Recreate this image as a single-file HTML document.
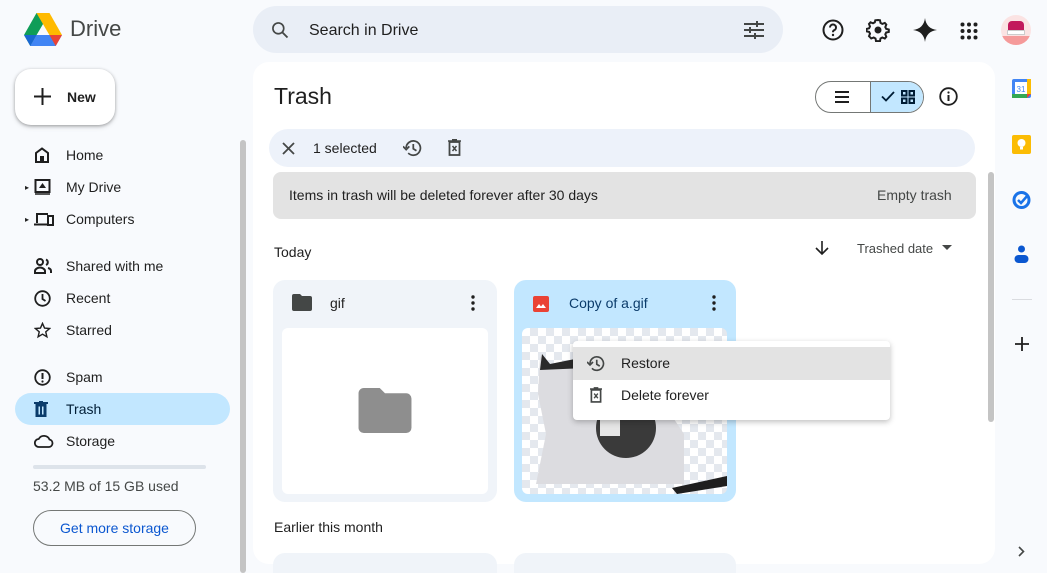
<!DOCTYPE html>
<html><head><style>
*{box-sizing:border-box;margin:0;padding:0}
body{width:1047px;height:573px;overflow:hidden;background:#f8fafd;font-family:"Liberation Sans",sans-serif;color:#1f1f1f;position:relative}
.a{position:absolute}
svg{display:block}
.nav{position:absolute;left:15px;width:215px;height:32px;display:flex;align-items:center;font-size:14px;color:#1f1f1f}
.nav svg{position:absolute;left:19px}
.nav span{position:absolute;left:51px}
.chk{background-color:#fff;background-image:linear-gradient(45deg,#e4e8ee 25%,transparent 25%,transparent 75%,#e4e8ee 75%),linear-gradient(45deg,#e4e8ee 25%,transparent 25%,transparent 75%,#e4e8ee 75%);background-size:16px 16px;background-position:0 0,8px 8px}
</style></head><body>
<!-- logo -->
<svg class="a" style="left:24px;top:13px" width="38" height="33" viewBox="0 0 38 33">
<polygon points="12.5,0 25.5,0 12.6,22 6.3,33 0,22" fill="#0f9d58"/>
<polygon points="12.5,0 25.5,0 38,22 25.4,22" fill="#ffba00"/>
<polygon points="6.3,33 12.6,22 38,22 31.7,33" fill="#4285f4"/>
<polygon points="25.4,22 38,22 31.7,33" fill="#ea4335"/>
<polygon points="0,22 12.6,22 6.3,33" fill="#1967d2"/>
</svg>
<div class="a" style="left:70px;top:16px;font-size:22px;color:#444746">Drive</div>
<!-- search -->
<div class="a" style="left:253px;top:6px;width:530px;height:47px;border-radius:24px;background:#e9eef6"></div>
<svg class="a" style="left:270px;top:20px" width="20" height="20" viewBox="0 0 24 24"><circle cx="10" cy="10" r="6.5" fill="none" stroke="#444746" stroke-width="2"/><path d="M15 15l6 6" stroke="#444746" stroke-width="2.2"/></svg>
<div class="a" style="left:309px;top:22px;font-size:16px;color:#1f1f1f">Search in Drive</div>
<svg class="a" style="left:743px;top:20px" width="22" height="20" viewBox="0 0 22 20"><path d="M1 4h20M1 10h20M1 16h20" stroke="#444746" stroke-width="2"/><path d="M14 1v6M7 7v6M12 13v6" stroke="#444746" stroke-width="2"/></svg>
<!-- top right icons -->
<svg class="a" style="left:822px;top:19px" width="22" height="22" viewBox="0 0 22 22"><circle cx="11" cy="11" r="9.5" fill="none" stroke="#1f1f1f" stroke-width="2"/><path d="M8 8.5a3 3 0 1 1 4 2.8c-.8.4-1 1-1 2" fill="none" stroke="#1f1f1f" stroke-width="2"/><circle cx="11" cy="16" r="1.2" fill="#1f1f1f"/></svg>
<svg class="a" style="left:866px;top:18px" width="24" height="24" viewBox="0 0 24 24"><path d="M12 2l2 .3.5 2.6 1.8 1 2.5-1 1.5 1.7-1 2.5.9 1.8 2.6.6v2.4l-2.6.6-.9 1.8 1 2.5-1.5 1.7-2.5-1-1.8 1-.5 2.6h-4l-.5-2.6-1.8-1-2.5 1L3 18.2l1-2.5-.9-1.8L.5 13.3v-2.4l2.6-.6.9-1.8-1-2.5L4.5 4.3l2.5 1 1.8-1L9.3 2.3z" fill="none" stroke="#1f1f1f" stroke-width="2"/><circle cx="12" cy="12" r="3.5" fill="#1f1f1f"/></svg>
<svg class="a" style="left:913px;top:18px" width="24" height="24" viewBox="0 0 24 24"><path d="M12 0C12.8 7 17 11.2 24 12 17 12.8 12.8 17 12 24 11.2 17 7 12.8 0 12 7 11.2 11.2 7 12 0z" fill="#1f1f1f"/></svg>
<svg class="a" style="left:960px;top:22px" width="18" height="18" viewBox="0 0 18 18" fill="#1f1f1f"><circle cx="2.5" cy="2.5" r="2"/><circle cx="9" cy="2.5" r="2"/><circle cx="15.5" cy="2.5" r="2"/><circle cx="2.5" cy="9" r="2"/><circle cx="9" cy="9" r="2"/><circle cx="15.5" cy="9" r="2"/><circle cx="2.5" cy="15.5" r="2"/><circle cx="9" cy="15.5" r="2"/><circle cx="15.5" cy="15.5" r="2"/></svg>
<div class="a" style="left:1001px;top:15px;width:30px;height:30px;border-radius:50%;background:#fbe3e3;overflow:hidden"><div style="position:absolute;left:7px;top:6px;width:16px;height:9px;background:#c2185b;border-radius:4px 4px 0 0"></div><div style="position:absolute;left:6px;top:15px;width:18px;height:5px;background:#fff;border:1px solid #ccc"></div><div style="position:absolute;left:0;top:21px;width:30px;height:9px;background:#f59a9a"></div></div>
<!-- New -->
<div class="a" style="left:15px;top:69px;width:100px;height:56px;border-radius:16px;background:#fff;box-shadow:0 1px 3px rgba(0,0,0,.3),0 2px 6px rgba(0,0,0,.12)"></div>
<svg class="a" style="left:34px;top:88px" width="17" height="17" viewBox="0 0 17 17"><path d="M8.5 0v17M0 8.5h17" stroke="#1f1f1f" stroke-width="2"/></svg>
<div class="a" style="left:67px;top:89px;font-size:14px;font-weight:bold;color:#1f1f1f">New</div>
<!-- nav -->
<div class="nav" style="top:139px"><svg width="16" height="16" viewBox="0 0 16 16"><path d="M2 15V6l6-4.5L14 6v9H2z" fill="none" stroke="#1f1f1f" stroke-width="2"/><rect x="6" y="9" width="4" height="6" fill="#1f1f1f"/></svg><span>Home</span></div>
<div class="nav" style="top:171px"><div class="a" style="left:10px;font-size:8px">▸</div><svg width="17" height="16" viewBox="0 0 17 16"><rect x="1.5" y="1" width="14" height="12" fill="none" stroke="#1f1f1f" stroke-width="2"/><path d="M5 9l3.5-5 3.5 5z" fill="#1f1f1f"/><path d="M1 15h15" stroke="#1f1f1f" stroke-width="1.5"/></svg><span>My Drive</span></div>
<div class="nav" style="top:203px"><div class="a" style="left:10px;font-size:8px">▸</div><svg width="20" height="16" viewBox="0 0 20 16"><path d="M3 12V3h11M0 13.5h13" fill="none" stroke="#1f1f1f" stroke-width="2"/><rect x="14" y="5" width="5" height="9" fill="none" stroke="#1f1f1f" stroke-width="2"/></svg><span>Computers</span></div>
<div class="nav" style="top:250px"><svg width="18" height="16" viewBox="0 0 18 16"><circle cx="6" cy="4" r="3" fill="none" stroke="#1f1f1f" stroke-width="2"/><path d="M1 15v-2c0-2 3-3.5 5-3.5s5 1.5 5 3.5v2z" fill="none" stroke="#1f1f1f" stroke-width="2"/><path d="M12 1.5a3 3 0 0 1 0 5.5M14 10c2 .5 3 1.5 3 3v2" fill="none" stroke="#1f1f1f" stroke-width="2"/></svg><span>Shared with me</span></div>
<div class="nav" style="top:282px"><svg width="17" height="17" viewBox="0 0 17 17"><circle cx="8.5" cy="8.5" r="7.3" fill="none" stroke="#1f1f1f" stroke-width="1.8"/><path d="M8.5 4v5l3 2" fill="none" stroke="#1f1f1f" stroke-width="1.8"/></svg><span>Recent</span></div>
<div class="nav" style="top:314px"><svg width="17" height="17" viewBox="0 0 24 24"><path d="M12 2l2.9 6.6 7.1.6-5.4 4.7 1.6 7-6.2-3.7-6.2 3.7 1.6-7L2 9.2l7.1-.6z" fill="none" stroke="#1f1f1f" stroke-width="2"/></svg><span>Starred</span></div>
<div class="nav" style="top:361px"><svg width="17" height="17" viewBox="0 0 17 17"><circle cx="8.5" cy="8.5" r="7.3" fill="none" stroke="#1f1f1f" stroke-width="1.8"/><path d="M8.5 4v6" stroke="#1f1f1f" stroke-width="2"/><circle cx="8.5" cy="12.5" r="1.1" fill="#1f1f1f"/></svg><span>Spam</span></div>
<div class="nav" style="top:393px;background:#c2e7ff;border-radius:16px;color:#001d35"><svg width="14" height="16" viewBox="0 0 14 16"><rect x="0" y="1" width="14" height="2" fill="#0b3c6b"/><rect x="1.5" y="3" width="11" height="13" fill="#0b3c6b"/><rect x="4.5" y="5.5" width="1.5" height="8" fill="#c2e7ff"/><rect x="8" y="5.5" width="1.5" height="8" fill="#c2e7ff"/><rect x="5" y="0" width="4" height="1.5" fill="#0b3c6b"/></svg><span>Trash</span></div>
<div class="nav" style="top:425px"><svg width="20" height="14" viewBox="0 0 20 14"><path d="M5 13a4 4 0 0 1-.3-8A6 6 0 0 1 15.5 5.5 3.8 3.8 0 0 1 15 13z" fill="none" stroke="#1f1f1f" stroke-width="1.8"/></svg><span>Storage</span></div>
<div class="a" style="left:33px;top:465px;width:173px;height:4px;border-radius:2px;background:#dde3ea"></div>
<div class="a" style="left:33px;top:478px;font-size:14px;color:#444746">53.2 MB of 15 GB used</div>
<div class="a" style="left:33px;top:510px;width:163px;height:36px;border:1px solid #747775;border-radius:18px;font-size:14px;color:#0b57d0;text-align:center;line-height:34px">Get more storage</div>
<div class="a" style="left:240px;top:140px;width:6px;height:433px;border-radius:3px;background:#c4c4c4"></div>
<!-- main panel -->
<div class="a" style="left:253px;top:62px;width:742px;height:502px;border-radius:16px;background:#fff"></div>
<div class="a" style="left:274px;top:83px;font-size:23px;color:#1f1f1f">Trash</div>
<div class="a" style="left:815px;top:81px;width:109px;height:32px;border:1px solid #747775;border-radius:16px;overflow:hidden"><div style="position:absolute;left:54px;top:0;width:55px;height:32px;background:#c2e7ff;border-left:1px solid #747775"></div></div>
<svg class="a" style="left:835px;top:91px" width="14" height="12" viewBox="0 0 14 12"><path d="M0 1h14M0 6h14M0 11h14" stroke="#1f1f1f" stroke-width="2"/></svg>
<svg class="a" style="left:881px;top:91px" width="14" height="11" viewBox="0 0 14 11"><path d="M1 5.5l4 4L13 1" fill="none" stroke="#001d35" stroke-width="1.8"/></svg>
<svg class="a" style="left:901px;top:90px" width="14" height="14" viewBox="0 0 14 14" fill="none" stroke="#001d35" stroke-width="2"><rect x="1" y="1" width="4.5" height="4.5"/><rect x="8.5" y="1" width="4.5" height="4.5"/><rect x="1" y="8.5" width="4.5" height="4.5"/><rect x="8.5" y="8.5" width="4.5" height="4.5"/></svg>
<svg class="a" style="left:939px;top:87px" width="19" height="19" viewBox="0 0 19 19"><circle cx="9.5" cy="9.5" r="8.3" fill="none" stroke="#1f1f1f" stroke-width="1.8"/><path d="M9.5 8v6" stroke="#1f1f1f" stroke-width="2"/><circle cx="9.5" cy="5.5" r="1.1" fill="#1f1f1f"/></svg>
<!-- selection bar -->
<div class="a" style="left:269px;top:129px;width:706px;height:38px;border-radius:19px;background:#edf2fa"></div>
<svg class="a" style="left:282px;top:142px" width="13" height="13" viewBox="0 0 13 13"><path d="M1 1l11 11M12 1L1 12" stroke="#444746" stroke-width="1.8"/></svg>
<div class="a" style="left:313px;top:140px;font-size:14px;color:#1f1f1f">1 selected</div>
<svg class="a" style="left:403px;top:139px" width="19" height="18" viewBox="0 0 24 22"><path d="M4 11a9 9 0 1 1 2.6 6.4" fill="none" stroke="#444746" stroke-width="2.2"/><path d="M0 9l4 4 4-4" fill="none" stroke="#444746" stroke-width="2.2"/><path d="M13 6v6l4 2.5" fill="none" stroke="#444746" stroke-width="2.2"/></svg>
<svg class="a" style="left:448px;top:139px" width="13" height="17" viewBox="0 0 13 17"><path d="M0 2h13M4 .8h5" stroke="#444746" stroke-width="1.6"/><rect x="1.5" y="3" width="10" height="13" fill="none" stroke="#444746" stroke-width="1.8"/><path d="M4.5 7l4 5M8.5 7l-4 5" stroke="#444746" stroke-width="1.5"/></svg>
<!-- banner -->
<div class="a" style="left:273px;top:172px;width:703px;height:47px;border-radius:8px;background:#e3e3e3"></div>
<div class="a" style="left:289px;top:187px;font-size:14px;color:#1f1f1f">Items in trash will be deleted forever after 30 days</div>
<div class="a" style="left:877px;top:187px;font-size:14px;color:#444746">Empty trash</div>
<div class="a" style="left:988px;top:172px;width:6px;height:250px;border-radius:3px;background:#c4c4c4"></div>
<div class="a" style="left:274px;top:244px;font-size:14px;color:#1f1f1f">Today</div>
<svg class="a" style="left:815px;top:241px" width="14" height="15" viewBox="0 0 14 15"><path d="M7 0v13M1 7l6 6 6-6" fill="none" stroke="#1f1f1f" stroke-width="1.6"/></svg>
<div class="a" style="left:857px;top:241px;font-size:13px;color:#444746">Trashed date</div>
<svg class="a" style="left:942px;top:245px" width="10" height="6" viewBox="0 0 10 6"><path d="M0 0h10L5 5z" fill="#444746"/></svg>
<!-- card gif -->
<div class="a" style="left:273px;top:280px;width:224px;height:222px;border-radius:12px;background:#f0f4f9"></div>
<svg class="a" style="left:292px;top:294px" width="20" height="17" viewBox="0 0 20 17"><path d="M0 2a2 2 0 0 1 2-2h6l2 2h8a2 2 0 0 1 2 2v11a2 2 0 0 1-2 2H2a2 2 0 0 1-2-2z" fill="#444746"/></svg>
<div class="a" style="left:330px;top:295px;font-size:14px;color:#1f1f1f">gif</div>
<svg class="a" style="left:471px;top:295px" width="4" height="16" viewBox="0 0 4 16" fill="#1f1f1f"><circle cx="2" cy="2" r="1.7"/><circle cx="2" cy="8" r="1.7"/><circle cx="2" cy="14" r="1.7"/></svg>
<div class="a" style="left:282px;top:328px;width:206px;height:166px;border-radius:6px;background:#fff"></div>
<svg class="a" style="left:358px;top:388px" width="54" height="45" viewBox="0 0 20 17"><path d="M0 2a2 2 0 0 1 2-2h6l2 2h8a2 2 0 0 1 2 2v11a2 2 0 0 1-2 2H2a2 2 0 0 1-2-2z" fill="#8e8e8e"/></svg>
<!-- card copy -->
<div class="a" style="left:514px;top:280px;width:222px;height:222px;border-radius:12px;background:#c2e7ff"></div>
<svg class="a" style="left:533px;top:296px" width="16" height="16" viewBox="0 0 16 16"><rect width="16" height="16" rx="2" fill="#ea4335"/><path d="M3 12l3-4 2 2.5L10 8l3 4z" fill="#fff"/></svg>
<div class="a" style="left:569px;top:295px;font-size:14px;color:#0b3c6b">Copy of a.gif</div>
<svg class="a" style="left:712px;top:295px" width="4" height="16" viewBox="0 0 4 16" fill="#1f1f1f"><circle cx="2" cy="2" r="1.7"/><circle cx="2" cy="8" r="1.7"/><circle cx="2" cy="14" r="1.7"/></svg>
<div class="a chk" style="left:522px;top:328px;width:205px;height:166px;border-radius:6px;overflow:hidden">
<svg width="205" height="166" viewBox="0 0 205 166" style="position:absolute;left:0;top:0">
<path d="M18 28l8 10 30-6 8-6-2 40 20 10 60 0 20 30 0 50H14l10-50-8-40z" fill="#dcdce0"/>
<path d="M20 26l8 10 30-6 6-4 0 14-46 2z" fill="#2a2a2a"/>
<circle cx="104" cy="100" r="30" fill="#3a3a3a"/>
<rect x="78" y="92" width="20" height="16" fill="#e6e6e6"/>
<path d="M150 160l55-12v10l-50 8z" fill="#1e1e1e"/>
</svg>
</div>
<!-- menu -->
<div class="a" style="left:573px;top:341px;width:317px;height:79px;border-radius:4px;background:#fff;box-shadow:0 2px 6px rgba(0,0,0,.25)"></div>
<div class="a" style="left:573px;top:347px;width:317px;height:33px;background:#e3e3e3"></div>
<svg class="a" style="left:587px;top:355px" width="18" height="17" viewBox="0 0 24 22"><path d="M4 11a9 9 0 1 1 2.6 6.4" fill="none" stroke="#444746" stroke-width="2.2"/><path d="M0 9l4 4 4-4" fill="none" stroke="#444746" stroke-width="2.2"/><path d="M13 6v6l4 2.5" fill="none" stroke="#444746" stroke-width="2.2"/></svg>
<div class="a" style="left:621px;top:355px;font-size:14px;color:#1f1f1f">Restore</div>
<svg class="a" style="left:590px;top:387px" width="12" height="16" viewBox="0 0 13 17"><path d="M0 2h13M4 .8h5" stroke="#444746" stroke-width="1.6"/><rect x="1.5" y="3" width="10" height="13" fill="none" stroke="#444746" stroke-width="1.8"/><path d="M4.5 7l4 5M8.5 7l-4 5" stroke="#444746" stroke-width="1.5"/></svg>
<div class="a" style="left:621px;top:387px;font-size:14px;color:#1f1f1f">Delete forever</div>
<div class="a" style="left:274px;top:519px;font-size:14px;color:#1f1f1f">Earlier this month</div>
<div class="a" style="left:273px;top:553px;width:224px;height:20px;border-radius:12px 12px 0 0;background:#f0f4f9"></div>
<div class="a" style="left:514px;top:553px;width:222px;height:20px;border-radius:12px 12px 0 0;background:#f0f4f9"></div>
<!-- right rail -->
<svg class="a" style="left:1012px;top:79px" width="19" height="19" viewBox="0 0 19 19"><rect width="19" height="19" rx="2" fill="#4285f4"/><rect x="0" y="15" width="15" height="4" fill="#34a853"/><rect x="15" y="0" width="4" height="15" fill="#fbbc04"/><path d="M15 15h4l-4 4z" fill="#ea4335"/><rect x="3" y="3" width="12" height="12" fill="#fff"/><text x="9" y="13" font-size="8" fill="#4285f4" text-anchor="middle" font-family="Liberation Sans">31</text></svg>
<svg class="a" style="left:1012px;top:135px" width="19" height="19" viewBox="0 0 19 19"><rect width="19" height="19" rx="2" fill="#fbbc04"/><circle cx="9.5" cy="8" r="4" fill="#fff"/><rect x="8" y="12" width="3" height="2.5" fill="#fff"/></svg>
<svg class="a" style="left:1012px;top:190px" width="19" height="19" viewBox="0 0 19 19"><circle cx="9.5" cy="10" r="7.5" fill="none" stroke="#1a73e8" stroke-width="3"/><path d="M6 10l3 3 7-8" fill="none" stroke="#1a73e8" stroke-width="2.5"/></svg>
<svg class="a" style="left:1014px;top:245px" width="15" height="19" viewBox="0 0 15 19"><circle cx="7.5" cy="4" r="3.5" fill="#0b57d0"/><rect x="0.5" y="10" width="14" height="8" rx="4" fill="#0b57d0"/></svg>
<div class="a" style="left:1012px;top:299px;width:20px;height:1px;background:#dadce0"></div>
<svg class="a" style="left:1015px;top:337px" width="14" height="14" viewBox="0 0 14 14"><path d="M7 0v14M0 7h14" stroke="#1f1f1f" stroke-width="1.8"/></svg>
<svg class="a" style="left:1018px;top:546px" width="7" height="11" viewBox="0 0 7 11"><path d="M1 1l4.5 4.5L1 10" fill="none" stroke="#444746" stroke-width="1.6"/></svg>
</body></html>
